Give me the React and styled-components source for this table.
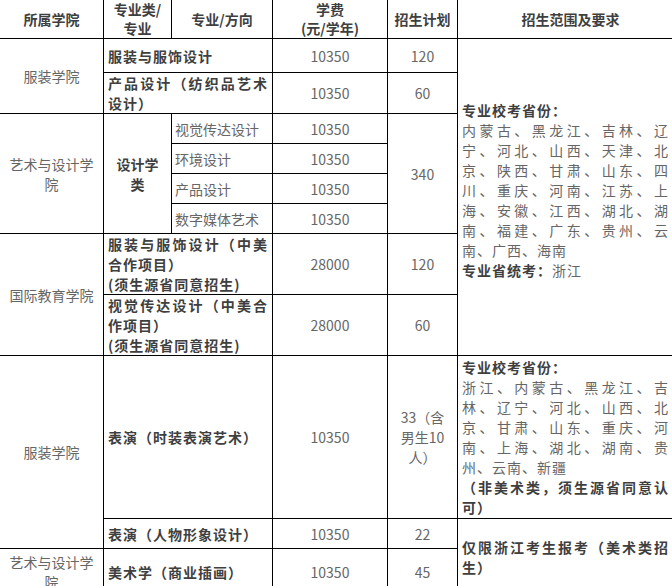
import React from "react";
import styled, { createGlobalStyle } from "styled-components";

const Global = createGlobalStyle`
  html, body { margin: 0; padding: 0; background: #fff; overflow: hidden; }
  body { font-family: "Noto Sans CJK SC", "Noto Sans", sans-serif; }
`;

const Table = styled.table`
  border-collapse: collapse;
  table-layout: fixed;
  width: 684px;
  margin: -1px 0 0 -1px;
  font-family: "Noto Sans CJK SC", "Noto Sans", sans-serif;
  font-size: 14px;
  line-height: 20px;
  color: #666;
`;

const Row = styled.tr`
  height: ${(p) => p.$h}px;
`;

const Cell = styled.td`
  border: 1px solid #000;
  padding: 0 4px;
  vertical-align: middle;
  overflow: hidden;
`;

const HeadCell = styled(Cell).attrs({ as: "th" })`
  font-weight: 700;
  color: #3f3f3f;
  text-align: center;
  line-height: 19px;
`;

const CollegeCell = styled(Cell)`
  text-align: center;
  padding: 0 5px;
`;

const MajorCell = styled(Cell)`
  font-weight: 700;
  color: #3f3f3f;
  letter-spacing: 1px;
  text-align: justify;
`;

const GroupCell = styled(Cell)`
  font-weight: 700;
  color: #3f3f3f;
  text-align: center;
  padding: 0 7px;
`;

const DirectionCell = styled(Cell)`
  text-align: left;
  padding: 0 3px;
`;

const NumCell = styled(Cell)`
  text-align: center;
  padding: 0 7px;
`;

const ScopeCell = styled(Cell)`
  text-align: justify;
  letter-spacing: 1px;
  padding: ${(p) => p.$pad || "0 4px"};
  color: #666;
`;

const ScopeBody = styled.div`
  width: 207px;
`;

const Strong = styled.strong`
  font-weight: 700;
  color: #3f3f3f;
`;

const Line = styled.div``;

export default function App() {
  return (
    <>
      <Global />
      <Table lang="zh-CN">
        <colgroup>
          <col style={{ width: 104 }} />
          <col style={{ width: 68 }} />
          <col style={{ width: 101 }} />
          <col style={{ width: 115 }} />
          <col style={{ width: 70 }} />
          <col style={{ width: 226 }} />
        </colgroup>
        <tbody>
          <Row $h={38}>
            <HeadCell>所属学院</HeadCell>
            <HeadCell>专业类/<br />专业</HeadCell>
            <HeadCell>专业/方向</HeadCell>
            <HeadCell>学费<br />(元/学年)</HeadCell>
            <HeadCell>招生计划</HeadCell>
            <HeadCell>招生范围及要求</HeadCell>
          </Row>
          <Row $h={34}>
            <CollegeCell rowSpan={2}>服装学院</CollegeCell>
            <MajorCell colSpan={2}>服装与服饰设计</MajorCell>
            <NumCell>10350</NumCell>
            <NumCell>120</NumCell>
            <ScopeCell rowSpan={8} $pad="0 4px 14px 4px">
              <ScopeBody>
                <Line><Strong>专业校考省份：</Strong></Line>
                <Line>内蒙古、黑龙江、吉林、辽宁、河北、山西、天津、北京、陕西、甘肃、山东、四川、重庆、河南、江苏、上海、安徽、江西、湖北、湖南、福建、广东、贵州、云南、广西、海南</Line>
                <Line><Strong>专业省统考：</Strong>浙江</Line>
              </ScopeBody>
            </ScopeCell>
          </Row>
          <Row $h={41}>
            <MajorCell colSpan={2}>产品设计（纺织品艺术设计）</MajorCell>
            <NumCell>10350</NumCell>
            <NumCell>60</NumCell>
          </Row>
          <Row $h={30}>
            <CollegeCell rowSpan={4}>艺术与设计学院</CollegeCell>
            <GroupCell rowSpan={4}>设计学类</GroupCell>
            <DirectionCell>视觉传达设计</DirectionCell>
            <NumCell>10350</NumCell>
            <NumCell rowSpan={4}>340</NumCell>
          </Row>
          <Row $h={30}>
            <DirectionCell>环境设计</DirectionCell>
            <NumCell>10350</NumCell>
          </Row>
          <Row $h={30}>
            <DirectionCell>产品设计</DirectionCell>
            <NumCell>10350</NumCell>
          </Row>
          <Row $h={30}>
            <DirectionCell>数字媒体艺术</DirectionCell>
            <NumCell>10350</NumCell>
          </Row>
          <Row $h={61}>
            <CollegeCell rowSpan={2}>国际教育学院</CollegeCell>
            <MajorCell colSpan={2}>
              服装与服饰设计（中美合作项目）<br />(须生源省同意招生)
            </MajorCell>
            <NumCell>28000</NumCell>
            <NumCell>120</NumCell>
          </Row>
          <Row $h={61}>
            <MajorCell colSpan={2}>
              视觉传达设计（中美合作项目）<br />(须生源省同意招生)
            </MajorCell>
            <NumCell>28000</NumCell>
            <NumCell>60</NumCell>
          </Row>
          <Row $h={162}>
            <CollegeCell rowSpan={2}>服装学院</CollegeCell>
            <MajorCell colSpan={2}>表演（时装表演艺术）</MajorCell>
            <NumCell>10350</NumCell>
            <NumCell>33（含男生10人）</NumCell>
            <ScopeCell $pad="1px 4px 1px 4px">
              <ScopeBody>
                <Line><Strong>专业校考省份：</Strong></Line>
                <Line>浙江、内蒙古、黑龙江、吉林、辽宁、河北、山西、北京、甘肃、山东、重庆、河南、上海、湖北、湖南、贵州、云南、新疆</Line>
                <Line><Strong>（非美术类，须生源省同意认可）</Strong></Line>
              </ScopeBody>
            </ScopeCell>
          </Row>
          <Row $h={30}>
            <MajorCell colSpan={2}>表演（人物形象设计）</MajorCell>
            <NumCell>10350</NumCell>
            <NumCell>22</NumCell>
            <ScopeCell rowSpan={2}>
              <ScopeBody>
                <Strong>仅限浙江考生报考（美术类招生）</Strong>
              </ScopeBody>
            </ScopeCell>
          </Row>
          <Row $h={46}>
            <CollegeCell>艺术与设计学院</CollegeCell>
            <MajorCell colSpan={2}>美术学（商业插画）</MajorCell>
            <NumCell>10350</NumCell>
            <NumCell>45</NumCell>
          </Row>
        </tbody>
      </Table>
    </>
  );
}
